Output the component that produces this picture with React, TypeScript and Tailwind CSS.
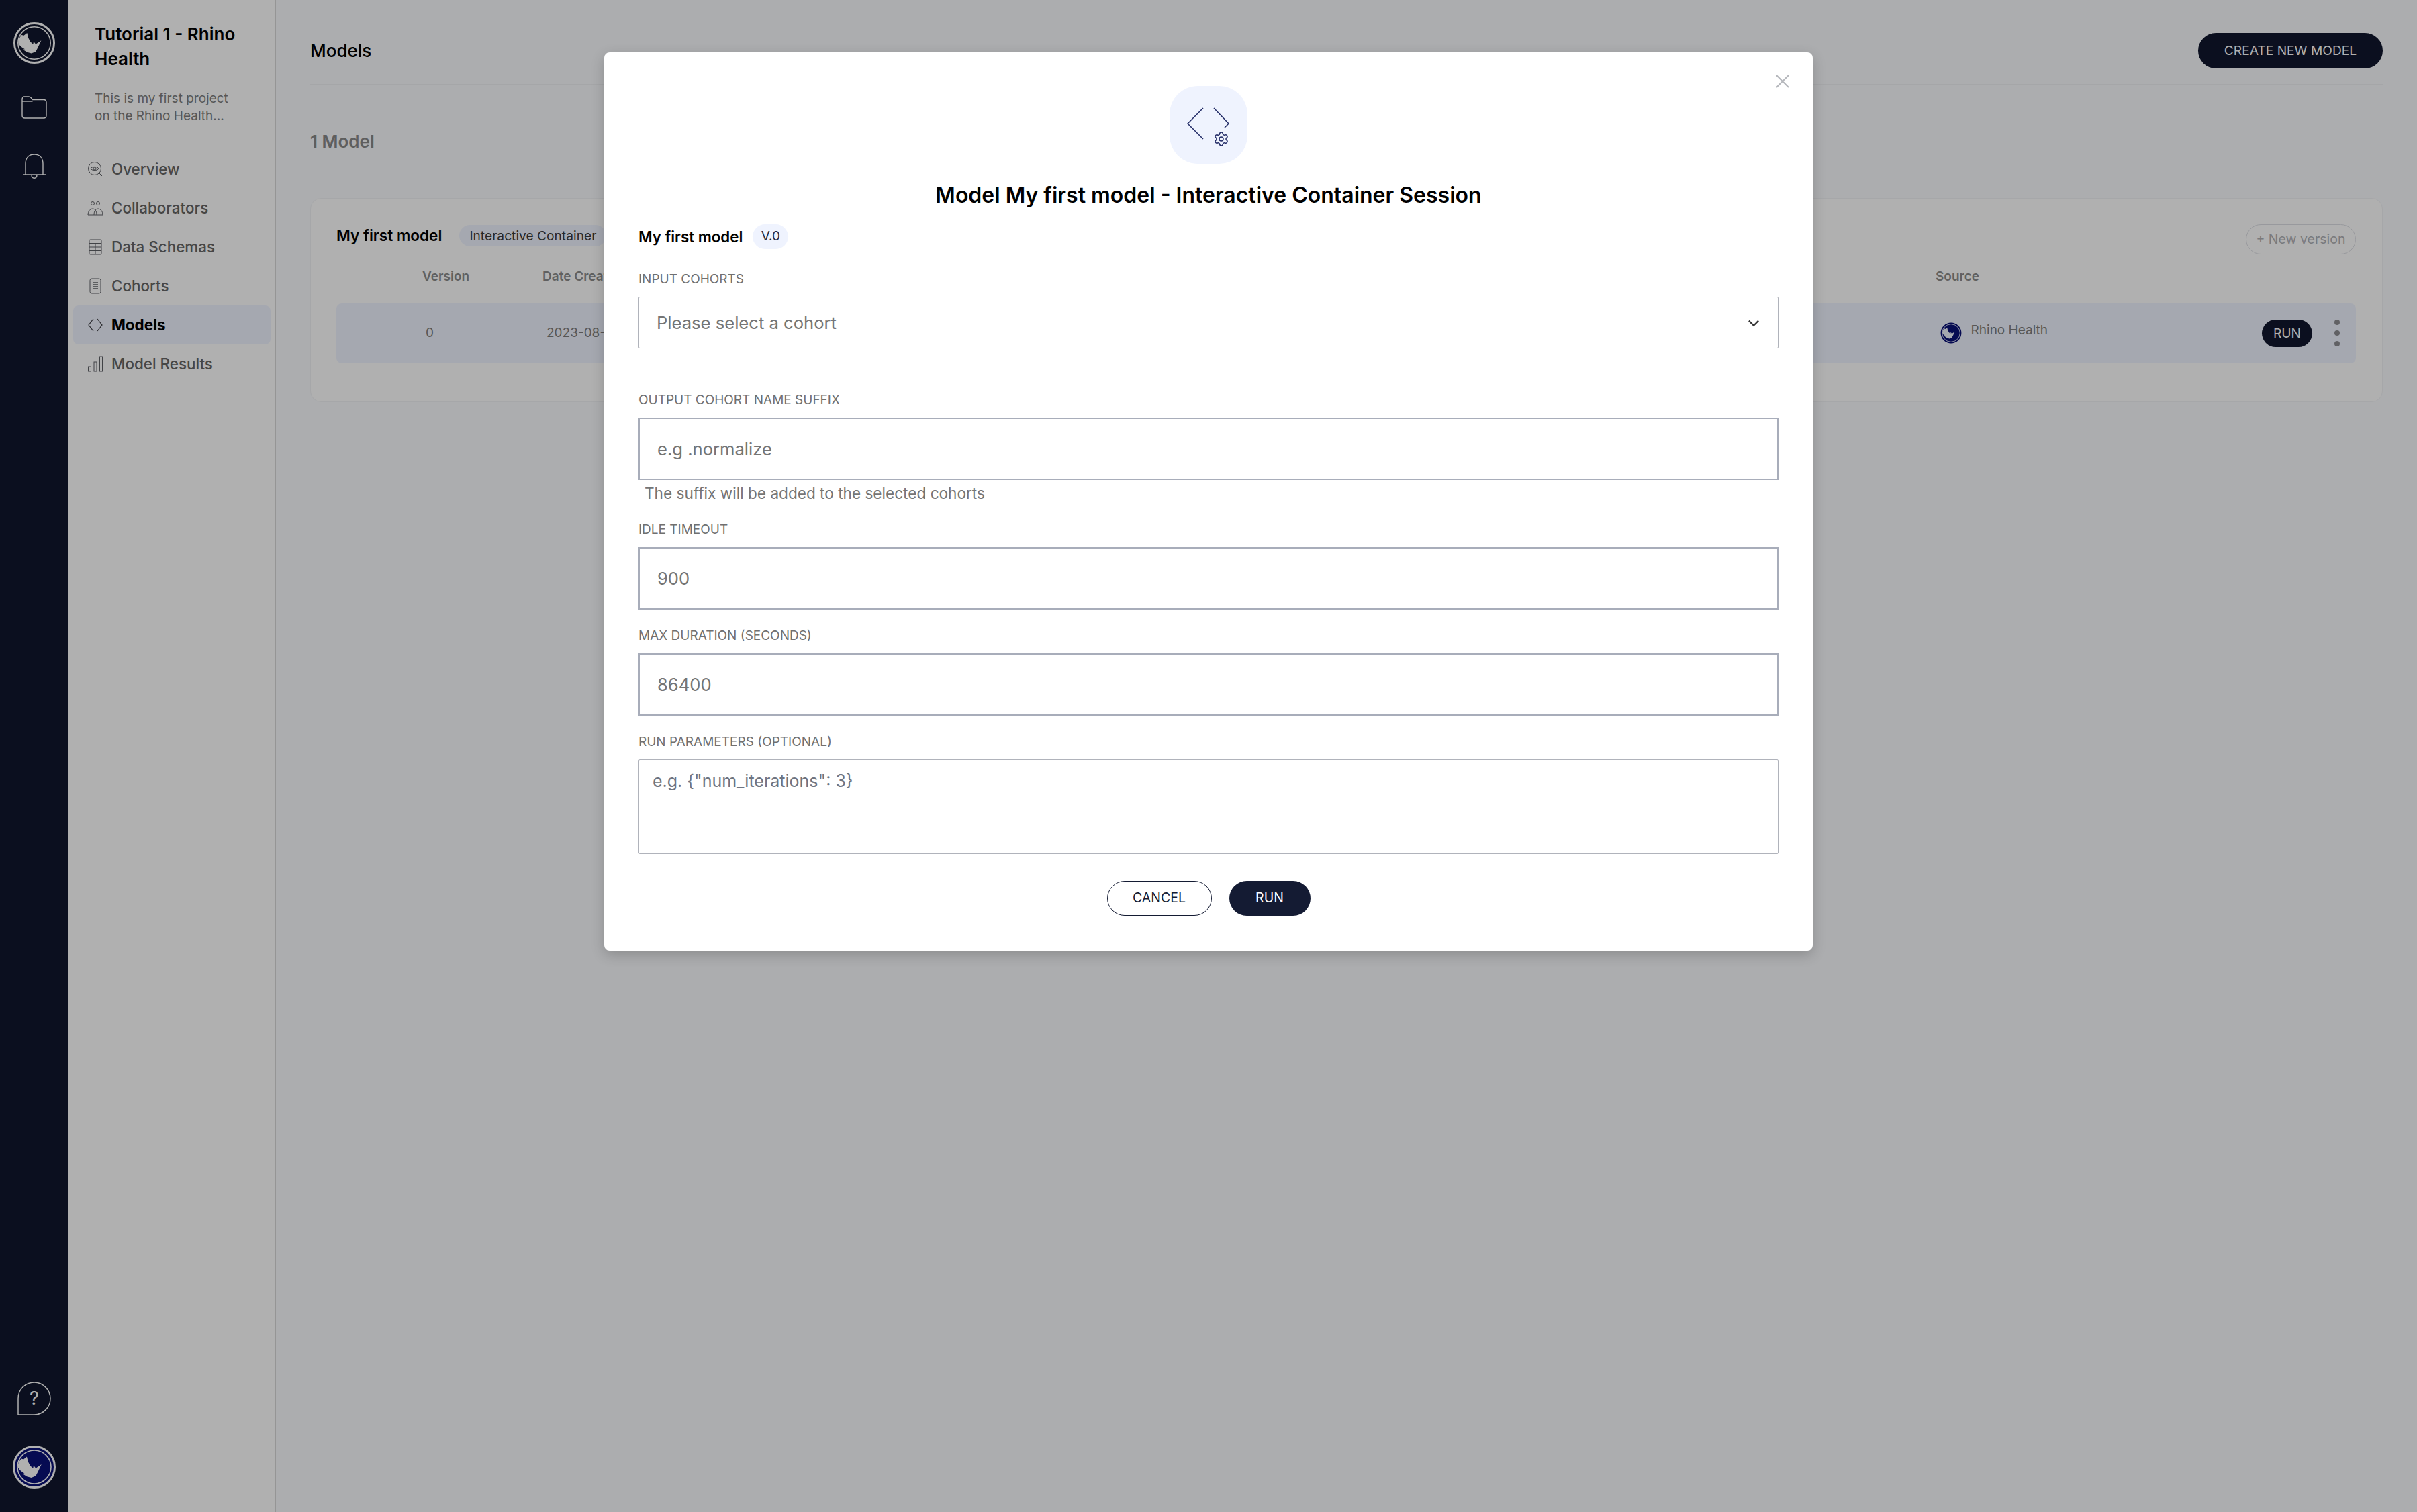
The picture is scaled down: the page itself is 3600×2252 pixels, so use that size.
import { Settings } from "lucide-react";

const NAV = [
  { id: "overview", label: "Overview" },
  { id: "collaborators", label: "Collaborators" },
  { id: "schemas", label: "Data Schemas" },
  { id: "cohorts", label: "Cohorts" },
  { id: "models", label: "Models" },
  { id: "results", label: "Model Results" },
];

function RhinoLogo({ size, ring, field, mark }: { size: number; ring: string; field: string; mark: string }) {
  return (
    <svg width={size} height={size} viewBox="0 0 64 64">
      <circle cx="32" cy="32" r="30.5" fill={field} stroke={ring} strokeWidth="3" />
      <circle cx="32" cy="32" r="25" fill="none" stroke={mark} strokeWidth="1.6" />
      <path
        d="M7.5 32C8 26 10 22.500 12.700 19.500L16 20.500L21 16.500L22.700 23.700L26 30.300L30.300 33.700L31 29.700L34.300 33.700L42.700 28L37.700 38.700L34.300 45.300L27.700 48L21 46.300L14.300 42L17.500 41.500C13 39 9 36 7.500 32Z"
        fill={mark}
      />
    </svg>
  );
}

function NavIcon({ id }: { id: string }) {
  const common = { width: 24, height: 24, viewBox: "0 0 24 24", fill: "none", stroke: "#5f6166", strokeWidth: 1 };
  if (id === "overview")
    return (
      <svg {...common}>
        <circle cx="11" cy="11" r="9.500" />
        <path d="M5 11c2-3.500 10-3.500 12 0c-2 3.500-10 3.500-12 0Z" />
        <circle cx="11" cy="11" r="2" />
        <path d="M18 18l4 4" />
      </svg>
    );
  if (id === "collaborators")
    return (
      <svg {...common}>
        <circle cx="8" cy="5" r="2.500" />
        <circle cx="16" cy="5" r="2.500" />
        <path d="M1 22c0-5 3-9 7-9c2 0 3 1 4 2c1-1 2-2 4-2c4 0 7 4 7 9Z" />
        <path d="M12 15c-1.500 2-2 4-2 7M12 15c1.500 2 2 4 2 7" />
      </svg>
    );
  if (id === "schemas")
    return (
      <svg {...common}>
        <rect x="3" y="1" width="18" height="22" rx="1.500" />
        <path d="M3 6.500h18M3 12h18M3 17.500h18M12 6.500V23" />
      </svg>
    );
  if (id === "cohorts")
    return (
      <svg {...common}>
        <rect x="4" y="1" width="16" height="22" rx="2.500" />
        <path d="M8 7h8M8 10h8M8 13h8M8 16h8" strokeWidth="1.400" />
      </svg>
    );
  if (id === "models")
    return (
      <svg {...common} stroke="#3a3b40">
        <path d="M9 3l-7 9l7 9M15 3l7 9l-7 9" strokeWidth="1.200" />
      </svg>
    );
  return (
    <svg {...common}>
      <rect x="1.500" y="16" width="4" height="7" />
      <rect x="10" y="9" width="4" height="14" />
      <rect x="18.500" y="1" width="4" height="22" />
    </svg>
  );
}

function Field({ label, value, helper }: { label: string; value: string; helper?: string }) {
  return (
    <div>
      <p className="text-[19px] leading-[22px] text-[#707070]">{label}</p>
      <div className="mt-[15px] flex h-[93px] items-center border-2 border-[#a8adba] pl-[26px] pt-[2px] text-[25.600px] text-[#757575]">
        {value}
      </div>
      {helper && <p className="ml-[9px] mt-[8px] h-[24px] text-[22.600px] leading-[24px] text-[#757575]">{helper}</p>}
    </div>
  );
}

export default function App() {
  return (
    <div className="relative flex h-[2252px] w-[3600px] overflow-hidden bg-[#f9fbfe] font-['Inter',sans-serif] text-black">
      {/* Rail */}
      <aside className="flex w-[102px] shrink-0 flex-col items-center justify-between bg-[#11172d] pb-[35px] pt-[33px]">
        <div className="flex flex-col items-center">
          <RhinoLogo size={62} ring="#ffffff" field="#11172d" mark="#ffffff" />
          <svg className="mt-[48px]" width="38" height="34" viewBox="0 0 38 34" fill="none" stroke="#ffffff" strokeWidth="1.400">
            <path d="M1 5.500C1 2.500 2 1 4 1h7c2 0 3 1 4 2.500l1.500 2H33c2.500 0 4 1.500 4 4V29c0 2.500-1.500 4-4 4H5c-2.500 0-4-1.500-4-4Z" />
            <path d="M1 8h15.500" />
          </svg>
          <svg className="mt-[52px]" width="36" height="38" viewBox="0 0 36 38" fill="none" stroke="#ffffff" strokeWidth="1.400">
            <path d="M5 31V15C5 6 10 1 18 1s13 5 13 14v16ZM1 31h34" />
            <path d="M14 31c0 7 8 7 8 0" />
          </svg>
        </div>
        <div className="flex flex-col items-center">
          <svg width="50" height="50" viewBox="0 0 50 50" fill="none" stroke="#ffffff" strokeWidth="1.500">
            <path d="M1 49V25C1 11 12 1 25 1s24 11 24 24s-11 24-24 24Z" />
            <text x="25" y="34" textAnchor="middle" fontSize="27" fill="#ffffff" stroke="none" fontFamily="Inter, sans-serif">?</text>
          </svg>
          <div className="mt-[45px]">
            <RhinoLogo size={64} ring="#ffffff" field="#0a1178" mark="#ffffff" />
          </div>
        </div>
      </aside>

      {/* Project sidebar */}
      <aside className="w-[309px] shrink-0 border-r border-[#d8d8d8] bg-white pl-[7px] pr-[7px] pt-[32px]">
        <div className="pl-[32px]">
          <h2 className="w-[240px] text-[26px] font-semibold leading-[37px]">Tutorial 1 - Rhino Health</h2>
          <p className="mt-[28px] w-[220px] text-[19px] leading-[26px] text-[#7d7d7d]">
            This is my first project on the Rhino Health...
          </p>
        </div>
        <nav className="mt-[37px] flex flex-col">
          {NAV.map((item) => (
            <div
              key={item.id}
              className={`flex h-[58px] items-center gap-[12px] rounded-[8px] pl-[21px] text-[22.400px] ${
                item.id === "models" ? "bg-[#f0f4ff] font-bold text-black" : "font-medium text-[#666666]"
              }`}
            >
              <NavIcon id={item.id} />
              {item.label}
            </div>
          ))}
        </nav>
      </aside>

      {/* Main */}
      <main className="flex-1 pl-[51px] pr-[51px]">
        <header className="flex h-[127px] items-center justify-between border-b-2 border-[#f0f1f4] pt-[26px]">
          <h1 className="text-[26px] font-medium">Models</h1>
          <button className="h-[53px] w-[275px] rounded-full bg-[#11172d] text-[19.200px] text-white">
            CREATE NEW MODEL
          </button>
        </header>
        <p className="mt-[66px] text-[26px] font-semibold leading-[36px] text-[#888888]">1 Model</p>
        <section className="mt-[66px] h-[304px] rounded-[16px] border border-[#f1f2f5] bg-white pl-[38px] pr-[39px] pt-[38px]">
          <div className="flex items-center justify-between">
            <div className="mb-[12px] flex items-center gap-[26px]">
              <span className="text-[22.600px] font-semibold">My first model</span>
              <span className="flex h-[32px] items-center rounded-full bg-[#f0f4ff] px-[15px] text-[19.200px] text-[#3a3a3a]">
                Interactive Container
              </span>
            </div>
            <span className="flex h-[45px] w-[164px] items-center justify-center rounded-full border border-[#dcdee4] text-[19.500px] text-[#b0b1b5]">
              + New version
            </span>
          </div>
          <div className="mt-[8px] flex h-[48px] items-center text-[19px] font-semibold text-[#8c8c8c]">
            <span className="ml-[128px] w-[179px]">Version</span>
            <span>Date Created</span>
            <span className="ml-auto mr-[561px]">Source</span>
          </div>
          <div className="mt-[16px] flex h-[89px] items-center rounded-[8px] bg-[#f0f4ff] text-[19px] text-[#7d7d7d]">
            <span className="ml-[133px] w-[180px]">0</span>
            <span>2023-08-11</span>
            <span className="ml-auto flex items-center gap-[13px]">
              <RhinoLogo size={34} ring="#f0f4ff" field="#0a1178" mark="#f0f4ff" />
              <span className="mb-[8px]">Rhino Health</span>
            </span>
            <span className="ml-[319px] flex h-[41px] w-[75px] items-center justify-center rounded-full bg-[#11172d] text-[19.200px] text-white">
              RUN
            </span>
            <span className="ml-[33px] mr-[24px] flex flex-col gap-[8px]">
              <span className="h-[8px] w-[8px] rounded-full bg-[#8d8d92]" />
              <span className="h-[8px] w-[8px] rounded-full bg-[#8d8d92]" />
              <span className="h-[8px] w-[8px] rounded-full bg-[#8d8d92]" />
            </span>
          </div>
        </section>
      </main>

      {/* Modal */}
      <div className="absolute inset-0 flex justify-center bg-black/31 pt-[78px]">
        <div className="relative h-[1338px] w-[1800px] rounded-[8px] bg-white px-[51px] pt-[50px] shadow-[0_6px_20px_rgba(0,0,0,0.2)]">
          <svg className="absolute right-[35px] top-[33px]" width="20" height="20" viewBox="0 0 20 20" fill="none" stroke="#b4b6bb" strokeWidth="2">
            <path d="M1 1l18 18M19 1L1 19" />
          </svg>
          <div className="mx-auto flex h-[116px] w-[116px] items-center justify-center rounded-[42px] bg-[#eff3fe]">
            <svg width="116" height="116" viewBox="0 0 116 116" fill="none" stroke="#222b66" strokeWidth="1.500">
              <path d="M50 33L27 56L50 79M66 33L88 56L82 62" />
              <Settings x={65} y={67} width={24} height={24} stroke="#222b66" strokeWidth={1.500} />
            </svg>
          </div>
          <h2 className="mt-[27px] text-center text-[32px] font-semibold leading-[40px]">
            Model My first model - Interactive Container Session
          </h2>
          <div className="mt-[23px] flex items-center gap-[15px]">
            <span className="text-[22.300px] font-semibold">My first model</span>
            <span className="flex h-[37px] w-[53px] items-center justify-center rounded-full bg-[#eff3fe] text-[19px] text-[#222b44]">
              V.0
            </span>
          </div>
          <p className="mt-[34px] text-[19px] leading-[22px] text-[#707070]">INPUT COHORTS</p>
          <div className="mt-[15px] flex h-[77px] items-center justify-between rounded-[2px] border border-[#b0b3bb] pl-[26px] pr-[27px] pt-[1px] text-[25.600px] text-[#757575]">
            Please select a cohort
            <svg width="18" height="11" viewBox="0 0 16 10" fill="none" stroke="#333333" strokeWidth="2">
              <path d="M1.500 1.500L8 8l6.500-6.500" />
            </svg>
          </div>
          <div className="mt-[66px]">
            <Field label="OUTPUT COHORT NAME SUFFIX" value="e.g .normalize" helper="The suffix will be added to the selected cohorts" />
          </div>
          <div className="mt-[31px]">
            <Field label="IDLE TIMEOUT" value="900" />
          </div>
          <div className="mt-[28px]">
            <Field label="MAX DURATION (SECONDS)" value="86400" />
          </div>
          <p className="mt-[28px] text-[19px] leading-[22px] text-[#707070]">RUN PARAMETERS (OPTIONAL)</p>
          <div className="mt-[15px] h-[141px] rounded-[2px] border border-[#b0b3bb] pl-[20px] pt-[15px] text-[25px] leading-[32px] text-[#6f7480]">
            {'e.g. {"num_iterations": 3}'}
          </div>
          <div className="mt-[40px] flex justify-center gap-[26px]">
            <button className="h-[52px] w-[156px] rounded-full border border-[#141b33] text-[19.500px] text-[#141b33]">
              CANCEL
            </button>
            <button className="h-[52px] w-[121px] rounded-full bg-[#141b33] text-[19.500px] text-white">
              RUN
            </button>
          </div>
        </div>
      </div>
    </div>
  );
}
